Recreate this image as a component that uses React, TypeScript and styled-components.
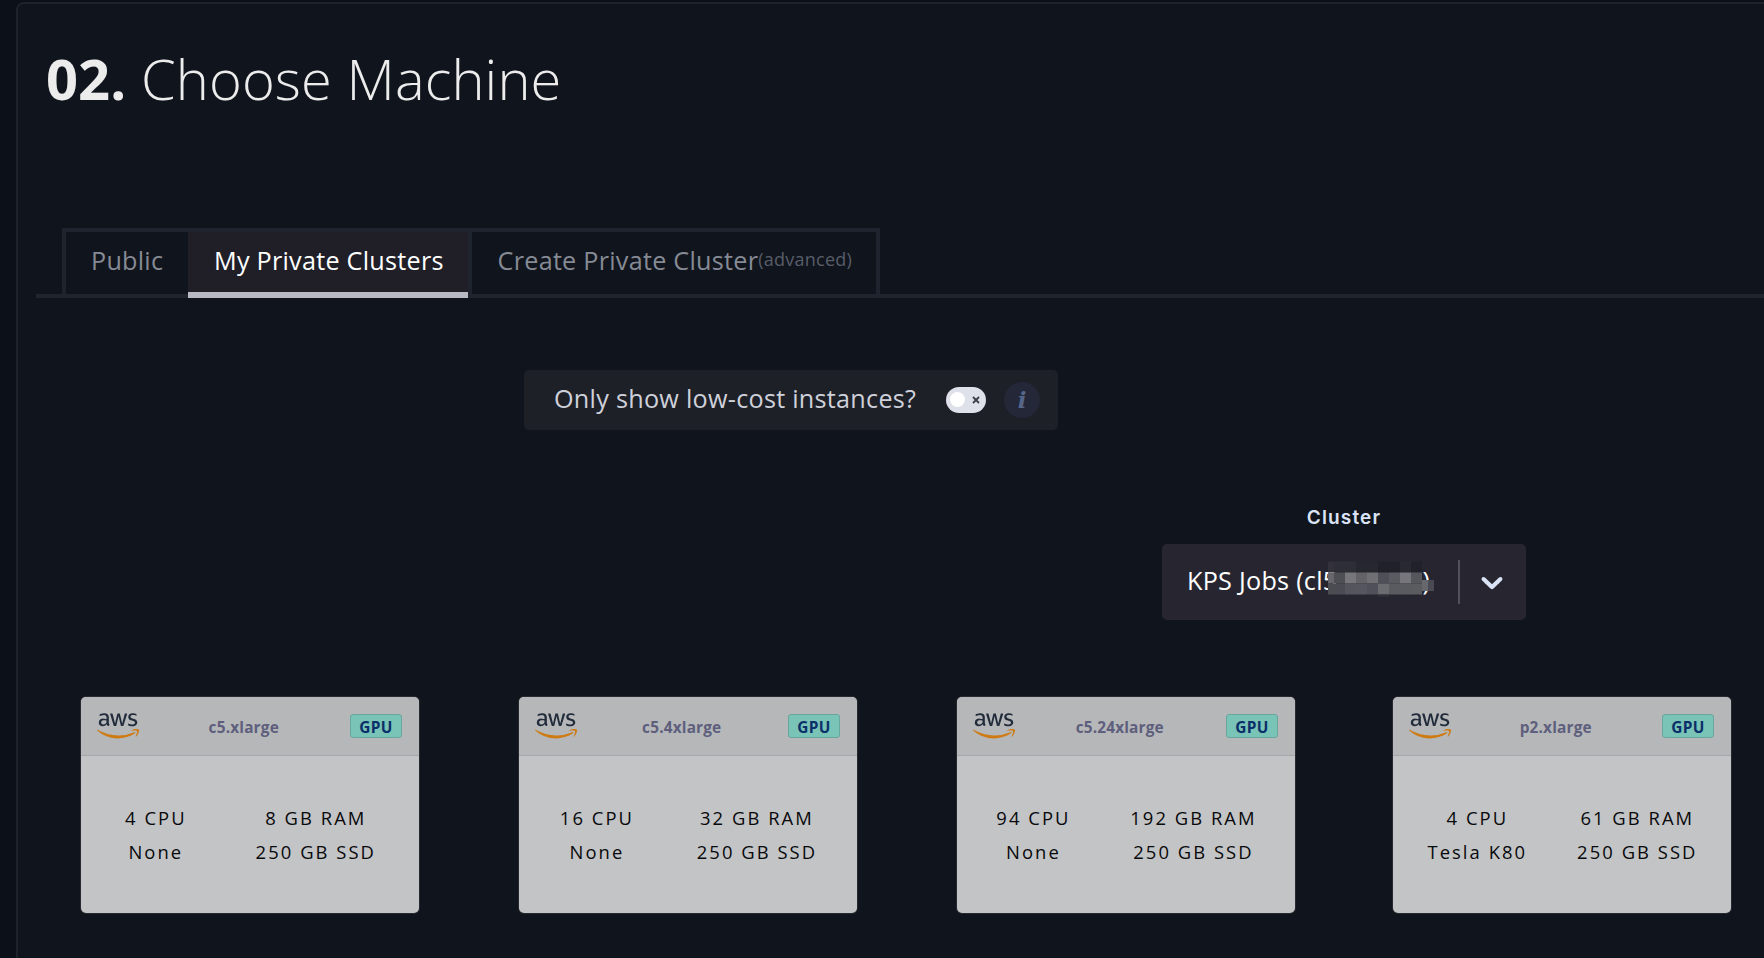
import React from 'react';
import styled, { createGlobalStyle, css } from 'styled-components';
import { FaAws } from 'react-icons/fa';

const GlobalStyle = createGlobalStyle`
  * { box-sizing: border-box; }
  body {
    margin: 0;
    background: #0c1018;
    font-family: "Open Sans", sans-serif;
    overflow: hidden;
  }
`;

const Page = styled.div`
  height: 958px;
  padding: 2px 0 0 16px;
  overflow: hidden;
`;

const Panel = styled.section`
  width: 1800px;
  height: 1000px;
  padding-top: 36px;
  background: #10141c;
  border: 2px solid #1e2229;
  border-radius: 8px;
`;

const Title = styled.h1`
  margin: 0 0 0 28px;
  height: 76px;
  line-height: 76px;
  font-size: 56px;
  font-weight: 300;
  letter-spacing: 0.1px;
  color: #ececec;
  white-space: nowrap;

  strong {
    font-weight: 700;
  }
`;

const TabBar = styled.nav`
  display: flex;
  align-items: flex-start;
  height: 70px;
  margin: 112px 0 0 18px;
  padding-left: 26px;
  border-bottom: 4px solid #20242e;
`;

const Tab = styled.button<{ $width: number; $active?: boolean; $last?: boolean }>`
  flex: none;
  width: ${(p) => p.$width}px;
  height: 66px;
  margin: 0;
  padding: 0 0 0 25px;
  border: 0 solid #1f232e;
  border-width: 4px 0 0 4px;
  background: transparent;
  color: #868a95;
  font: 400 25.2px/56px "Open Sans", sans-serif;
  letter-spacing: 0.25px;
  text-align: left;
  white-space: nowrap;
  display: flex;
  align-items: flex-start;

  ${(p) =>
    p.$active &&
    css`
      height: 70px;
      padding-left: 26px;
      border-left-width: 0;
      border-bottom: 6px solid #b9b9c3;
      background: #201f28;
      color: #ffffff;
    `}

  ${(p) =>
    p.$last &&
    css`
      padding-left: 25.6px;
      border-right-width: 4px;
    `}
`;

const TabNote = styled.span`
  font-size: 18px;
  line-height: 54px;
  color: #585d69;
`;

const FilterBox = styled.div`
  display: flex;
  align-items: center;
  width: 534px;
  height: 60px;
  margin: 72px 0 0 506px;
  padding-left: 30px;
  border-radius: 5px;
  background: #1e2028;
`;

const FilterLabel = styled.span`
  width: 392px;
  height: 60px;
  line-height: 56px;
  font-size: 25.2px;
  letter-spacing: 0.27px;
  color: #cfd1da;
  white-space: nowrap;
`;

const Toggle = styled.button`
  display: flex;
  align-items: center;
  justify-content: space-between;
  width: 40px;
  height: 26px;
  padding: 0 6px 0 4px;
  border: 0;
  border-radius: 13px;
  background: #dfe1ea;
`;

const Knob = styled.span`
  width: 15px;
  height: 15px;
  margin-top: -2px;
  border-radius: 50%;
  background: #ffffff;
`;

const InfoBadge = styled.span`
  width: 36px;
  height: 36px;
  margin-left: 18px;
  border-radius: 50%;
  background: #242738;
  color: #556689;
  font: italic 700 23px/36px "DejaVu Serif", serif;
  text-align: center;
`;

const ClusterField = styled.div`
  width: 364px;
  margin: 76px 0 0 1144px;
`;

const ClusterLabel = styled.label`
  display: block;
  height: 24px;
  margin-bottom: 14px;
  line-height: 24px;
  text-align: center;
  font-family: Inter, sans-serif;
  font-size: 19px;
  font-weight: 600;
  letter-spacing: 1.15px;
  color: #dbe3f6;
`;

const Select = styled.div`
  position: relative;
  display: flex;
  align-items: center;
  height: 76px;
  padding-left: 25px;
  border-radius: 5px;
  background: #272630;
  color: #dbe3f6;
`;

const SelectValue = styled.span`
  width: 271px;
  height: 76px;
  line-height: 72px;
  font-size: 25.2px;
  letter-spacing: 0.26px;
  color: #ffffff;
  white-space: nowrap;
`;

const HiddenId = styled.span`
  display: inline-block;
  width: 85px;
`;

const Mosaic = styled.svg`
  position: absolute;
  left: 166px;
  top: 17px;
`;

const Separator = styled.span`
  width: 2px;
  height: 44px;
  margin-right: 14px;
  background: #51505d;
`;

const CardRow = styled.div`
  display: grid;
  grid-template-columns: 438px 438px 436px 338px;
  margin: 77px 0 0 63px;
`;

const Card = styled.article`
  width: 338px;
  height: 216px;
  border-radius: 5px;
  background: #c3c4c6;
  box-shadow: 0 0 0 1px #262a30;
  overflow: hidden;
`;

const CardHeader = styled.header`
  display: flex;
  align-items: center;
  justify-content: space-between;
  height: 59px;
  padding: 0 17px 0 15.5px;
  border-bottom: 1px solid #a6a7aa;
  background: #b6b7b9;
`;

const AwsLogo = styled(FaAws)`
  width: 42px;
  height: 33.6px;

  path {
    fill: url(#aws-ink);
  }
`;

const MachineName = styled.span`
  padding: 3px 1px 0 0;
  font-size: 15.4px;
  font-weight: 700;
  line-height: 24px;
  letter-spacing: 0.17px;
  color: #5e5f7d;
`;

const GpuBadge = styled.span`
  width: 52px;
  height: 24px;
  padding-top: 2px;
  border: 1.5px solid #69a69c;
  border-radius: 3px;
  background: #79c3b7;
  color: #0b2f68;
  font-size: 15.4px;
  font-weight: 700;
  line-height: 22px;
  letter-spacing: 0.3px;
  text-align: center;
`;

const Specs = styled.div`
  display: flex;
  justify-content: space-around;
  padding: 45px 8.5px 0 9.5px;
`;

const SpecColumn = styled.div`
  display: flex;
  flex-direction: column;
  align-items: center;
  font-size: 18.4px;
  line-height: 34px;
  letter-spacing: 2.05px;
  color: #08090b;
  white-space: nowrap;
`;

const machines = [
  { name: 'c5.xlarge', cpu: '4 CPU', gpu: 'None', ram: '8 GB RAM', disk: '250 GB SSD' },
  { name: 'c5.4xlarge', cpu: '16 CPU', gpu: 'None', ram: '32 GB RAM', disk: '250 GB SSD' },
  { name: 'c5.24xlarge', cpu: '94 CPU', gpu: 'None', ram: '192 GB RAM', disk: '250 GB SSD' },
  { name: 'p2.xlarge', cpu: '4 CPU', gpu: 'Tesla K80', ram: '61 GB RAM', disk: '250 GB SSD' },
];

const mosaicRows = [
  ['#333139', '#2e2e36', '#2e2e36', '#27272f', '#27272f', '#21212a', '#21212a', '#292931', '#21212a'],
  ['#66666c', '#4e4e55', '#76767b', '#626267', '#6f6f74', '#4e4f57', '#5a5b60', '#77767d', '#56575c'],
  ['#4b4b52', '#4a4b53', '#54555d', '#55565e', '#4f5059', '#6b6c70', '#5a5b60', '#5a5b61', '#5b5c60'],
];

function RedactedId() {
  return (
    <Mosaic width="106" height="36" viewBox="0 0 106 36" aria-hidden="true">
      {mosaicRows.map((row, r) =>
        row.map((fill, c) => (
          <rect
            key={`${r}-${c}`}
            x={c === 0 ? 0 : 6 + (c - 1) * 11}
            y={0.5 + r * 11}
            width={c === 0 ? 6 : 11}
            height={11}
            fill={fill}
          />
        )),
      )}
      <rect x="50" y="33.5" width="11" height="2" fill="#33333b" />
      <rect x="94" y="19" width="6" height="11" fill="#67686d" />
      <rect x="100" y="19" width="6" height="11" fill="#4a4a52" />
    </Mosaic>
  );
}

function MachineCard({ machine }: { machine: (typeof machines)[number] }) {
  return (
    <Card>
      <CardHeader>
        <AwsLogo />
        <MachineName>{machine.name}</MachineName>
        <GpuBadge>GPU</GpuBadge>
      </CardHeader>
      <Specs>
        <SpecColumn>
          <span>{machine.cpu}</span>
          <span>{machine.gpu}</span>
        </SpecColumn>
        <SpecColumn>
          <span>{machine.ram}</span>
          <span>{machine.disk}</span>
        </SpecColumn>
      </Specs>
    </Card>
  );
}

export default function App() {
  return (
    <Page>
      <GlobalStyle />
      <Panel>
        <Title>
          <strong>02.</strong> Choose Machine
        </Title>
        <TabBar>
          <Tab $width={126}>Public</Tab>
          <Tab $width={280} $active>
            My Private Clusters
          </Tab>
          <Tab $width={412} $last>
            Create Private Cluster<TabNote>(advanced)</TabNote>
          </Tab>
        </TabBar>
        <FilterBox>
          <FilterLabel>Only show low-cost instances?</FilterLabel>
          <Toggle aria-label="Only show low-cost instances">
            <Knob />
            <svg width="8" height="8" viewBox="0 0 8 8">
              <path d="M1 1 7 7M7 1 1 7" stroke="#3c3d46" strokeWidth="1.8" />
            </svg>
          </Toggle>
          <InfoBadge>i</InfoBadge>
        </FilterBox>
        <ClusterField>
          <ClusterLabel>Cluster</ClusterLabel>
          <Select>
            <SelectValue>
              KPS Jobs (cl5<HiddenId />)
            </SelectValue>
            <RedactedId />
            <Separator />
            <svg width="36" height="36" viewBox="0 0 20 20" fill="currentColor">
              <path d="M4.516 7.548c0.436-0.446 1.043-0.481 1.576 0l3.908 3.747 3.908-3.747c0.533-0.481 1.141-0.446 1.574 0 0.436 0.445 0.408 1.197 0 1.615-0.406 0.418-4.695 4.502-4.695 4.502-0.217 0.223-0.502 0.335-0.787 0.335s-0.57-0.112-0.789-0.335c0 0-4.287-4.084-4.695-4.502s-0.436-1.17 0-1.615z" />
            </svg>
          </Select>
        </ClusterField>
        <CardRow>
          {machines.map((machine) => (
            <MachineCard key={machine.name} machine={machine} />
          ))}
        </CardRow>
        <svg width="0" height="0" aria-hidden="true">
          <defs>
            <linearGradient id="aws-ink" gradientUnits="userSpaceOnUse" x1="0" y1="0" x2="0" y2="512">
              <stop offset="0.57" stopColor="#222c3b" />
              <stop offset="0.57" stopColor="#cf7b14" />
            </linearGradient>
          </defs>
        </svg>
      </Panel>
    </Page>
  );
}
